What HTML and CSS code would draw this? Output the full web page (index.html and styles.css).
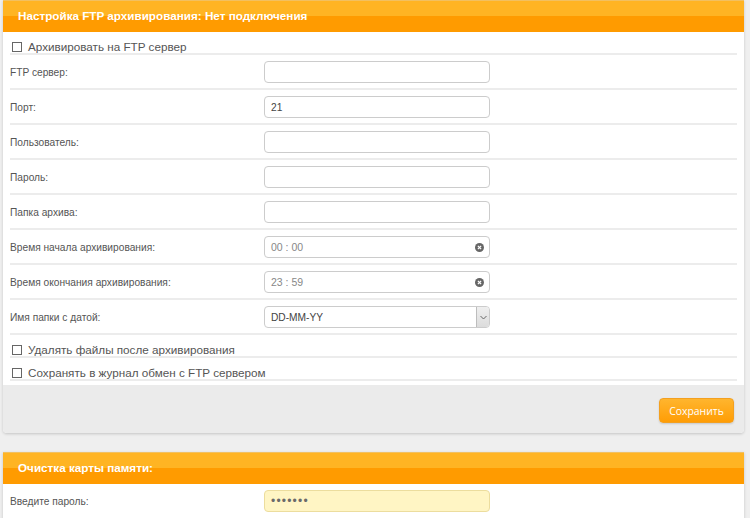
FILE: index.html
```html
<!DOCTYPE html>
<html lang="ru">
<head>
<meta charset="utf-8">
<title>FTP</title>
<link rel="stylesheet" href="styles.css">
</head>
<body>
<div class="page">
  <section class="panel">
    <div class="panel-head">Настройка FTP архивирования: Нет подключения</div>
    <div class="panel-body">
      <div class="check-row"><span class="cb"></span>Архивировать на FTP сервер</div>
      <div class="row"><span class="label">FTP сервер:</span><input class="field" type="text" value=""></div>
      <div class="row"><span class="label">Порт:</span><input class="field" type="text" value="21"></div>
      <div class="row"><span class="label">Пользователь:</span><input class="field" type="text" value=""></div>
      <div class="row"><span class="label">Пароль:</span><input class="field" type="text" value=""></div>
      <div class="row"><span class="label">Папка архива:</span><input class="field" type="text" value=""></div>
      <div class="row"><span class="label">Время начала архивирования:</span>
        <div class="field time"><span>00 : 00</span>
          <svg class="clear" width="9" height="9" viewBox="0 0 10 10"><circle cx="5" cy="5" r="5" fill="#666"/><path d="M3.2 3.2 L6.8 6.8 M6.8 3.2 L3.2 6.8" stroke="#fff" stroke-width="1.4"/></svg>
        </div>
      </div>
      <div class="row"><span class="label">Время окончания архивирования:</span>
        <div class="field time"><span>23 : 59</span>
          <svg class="clear" width="9" height="9" viewBox="0 0 10 10"><circle cx="5" cy="5" r="5" fill="#666"/><path d="M3.2 3.2 L6.8 6.8 M6.8 3.2 L3.2 6.8" stroke="#fff" stroke-width="1.4"/></svg>
        </div>
      </div>
      <div class="row"><span class="label">Имя папки с датой:</span>
        <div class="field select"><span class="sel-text">DD-MM-YY</span>
          <span class="sel-btn"><svg width="7" height="5" viewBox="0 0 7 5"><path d="M0.5 1 L3.5 4 L6.5 1" fill="none" stroke="#666" stroke-width="1"/></svg></span>
        </div>
      </div>
      <div class="check-row"><span class="cb"></span>Удалять файлы после архивирования</div>
      <div class="check-row"><span class="cb"></span>Сохранять в журнал обмен с FTP сервером</div>
    </div>
    <div class="panel-foot"><button class="btn" type="button">Сохранить</button></div>
  </section>

  <section class="panel second">
    <div class="panel-head">Очистка карты памяти:</div>
    <div class="panel-body">
      <div class="row plain"><span class="label">Введите пароль:</span><div class="field pass">&#8226;&#8226;&#8226;&#8226;&#8226;&#8226;&#8226;</div></div>
    </div>
  </section>
</div>
</body>
</html>
```

FILE: styles.css
```css
* { box-sizing: border-box; }
html, body { margin: 0; padding: 0; }
body {
  background: #efefef;
  font-family: "Liberation Sans", Arial, sans-serif;
  color: #555;
  height: 518px;
  overflow: hidden;
}
.page {
  padding-left: 3px;
  width: 744px;
}
.panel {
  background: #fff;
  border-radius: 0 0 4px 4px;
  box-shadow: 0 1px 3px rgba(0,0,0,0.18);
}
.panel.second {
  margin-top: 19px;
  border-radius: 0;
}
.panel-head {
  height: 32px;
  line-height: 30px;
  padding-left: 15px;
  color: #fff;
  font-weight: bold;
  font-size: 11.7px;
  background: linear-gradient(#ffb423 0, #ffb423 50%, #ff9b00 50%, #ff9b00 100%);
  border-top: 1px solid #f2c060;
}
.panel-body {
  padding: 0 7px 4px;
}
.check-row {
  height: 23px;
  padding: 8px 0 0 2px;
  line-height: 14px;
  font-size: 11.7px;
  color: #555;
  border-bottom: 2px solid #ececec;
  display: flex;
  align-items: flex-start;
}
.cb {
  display: inline-block;
  width: 10px;
  height: 10px;
  border: 1px solid #666;
  margin: 2px 6px 0 0;
  background: #fff;
}
.row {
  display: grid;
  grid-template-columns: 254px 226px;
  align-items: center;
  height: 35px;
  padding-top: 1px;
  border-bottom: 2px solid #ececec;
}
.row.plain {
  border-bottom: none;
  padding-top: 0;
  height: 34px;
}
.label {
  font-size: 10.2px;
  color: #555;
}
.field {
  height: 22px;
  width: 226px;
  border: 1px solid #cccccc;
  border-radius: 4px;
  background: #fff;
  font-family: "Liberation Sans", Arial, sans-serif;
  font-size: 10.2px;
  color: #444;
  padding: 0 6px;
  outline: none;
  margin: 0;
}
.time {
  display: flex;
  align-items: center;
  justify-content: space-between;
  font-size: 10.5px;
  color: #888;
  padding-right: 5px;
}
.clear { display: block; }
.select {
  display: flex;
  align-items: stretch;
  padding: 0 0 0 6px;
  overflow: hidden;
}
.sel-text {
  flex: 1;
  display: flex;
  align-items: center;
  color: #444;
}
.sel-btn {
  width: 13px;
  background: linear-gradient(#efefef, #dcdcdc);
  border-left: 1px solid #bdbdbd;
  display: flex;
  align-items: center;
  justify-content: center;
}
.pass {
  background: #fff5c4;
  border-color: #ecdd9e;
  display: flex;
  align-items: center;
  color: #6a6a6a;
  font-size: 12px;
  letter-spacing: 1.2px;
}
.panel-foot {
  background: #ebebeb;
  border-radius: 0 0 4px 4px;
  height: 48px;
  padding: 13px 10px 0 0;
  display: flex;
  justify-content: flex-end;
  align-items: flex-start;
}
.btn {
  height: 25px;
  width: 75px;
  padding: 0;
  border: 1px solid #f3a020;
  border-radius: 4px;
  background: linear-gradient(#ffb52e, #ff9d05);
  color: #fff;
  font-family: "Open Sans", sans-serif;
  font-size: 10.4px;
  box-shadow: 0 1px 2px rgba(0,0,0,0.15);
}
```
